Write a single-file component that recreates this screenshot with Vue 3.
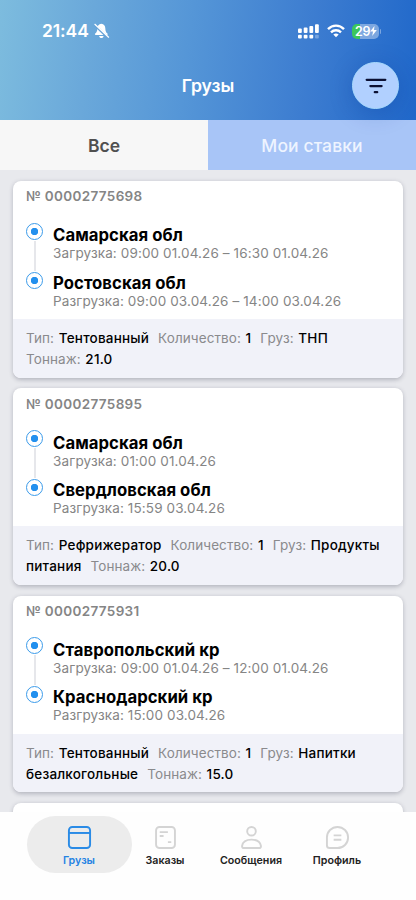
<script setup>
const cargos = [
  {
    id: '00002775698',
    stops: [
      { place: 'Самарская обл', time: 'Загрузка: 09:00 01.04.26 – 16:30 01.04.26' },
      { place: 'Ростовская обл', time: 'Разгрузка: 09:00 03.04.26 – 14:00 03.04.26' },
    ],
    meta: [['Тип:', 'Тентованный'], ['Количество:', '1'], ['Груз:', 'ТНП'], ['Тоннаж:', '21.0']],
  },
  {
    id: '00002775895',
    stops: [
      { place: 'Самарская обл', time: 'Загрузка: 01:00 01.04.26' },
      { place: 'Свердловская обл', time: 'Разгрузка: 15:59 03.04.26' },
    ],
    meta: [['Тип:', 'Рефрижератор'], ['Количество:', '1'], ['Груз:', 'Продукты питания'], ['Тоннаж:', '20.0']],
  },
  {
    id: '00002775931',
    stops: [
      { place: 'Ставропольский кр', time: 'Загрузка: 09:00 01.04.26 – 12:00 01.04.26' },
      { place: 'Краснодарский кр', time: 'Разгрузка: 15:00 03.04.26' },
    ],
    meta: [['Тип:', 'Тентованный'], ['Количество:', '1'], ['Груз:', 'Напитки безалкогольные'], ['Тоннаж:', '15.0']],
  },
]
</script>

<template>
  <div class="screen">
    <header class="header">
      <div class="status">
        <div class="clock">
          <span class="time">21:44</span>
          <svg class="bell" width="16" height="16" viewBox="0 0 16 16">
            <path d="M7.3 0.7C4.7 0.9 3.5 2.8 3.4 5.2C3.3 8.2 2.6 9.3 1.2 10.6C0.6 11.3 0.9 12 1.8 12H12.9C13.8 12 14 11.3 13.4 10.6C12 9.3 11.4 8.2 11.3 5.2C11.2 2.8 10 0.9 7.3 0.7Z" fill="#fff" />
            <path d="M5.1 13H9.6C9.3 14.4 8.5 15 7.35 15S5.4 14.4 5.1 13Z" fill="#fff" />
            <path d="M0.8 2.1L14 14.9" stroke="#68a3d7" stroke-width="2.2" />
            <path d="M0.9 1.3L14.6 14.2" stroke="#fff" stroke-width="1.2" stroke-linecap="round" />
          </svg>
        </div>
        <div class="indicators">
          <svg width="21" height="15" viewBox="0 0 21 15" fill="#fff">
            <rect x="0" y="4.6" width="3.8" height="4.4" rx="1" />
            <rect x="5.7" y="3.4" width="3.8" height="5.6" rx="1" />
            <rect x="11.4" y="1.9" width="3.8" height="7.1" rx="1" />
            <rect x="17" y="0.2" width="3.8" height="8.8" rx="1" />
            <rect x="0" y="10.8" width="3.8" height="3.8" rx="1" />
            <rect x="5.7" y="10.8" width="3.8" height="3.8" rx="1" />
            <rect x="11.4" y="10.8" width="3.8" height="3.8" rx="1" />
            <rect x="17" y="10.8" width="3.8" height="3.8" rx="1" opacity="0.3" />
          </svg>
          <svg class="wifi" width="18" height="14" viewBox="0 0 18 14" fill="none" stroke="#fff" stroke-width="2.4">
            <path d="M1 5.1C5.5 0.5 12.5 0.5 17 5.1" />
            <path d="M4 8.3C6.8 5.6 11.2 5.6 14 8.3" />
            <path d="M6.3 10.6C7.9 9.2 10.1 9.2 11.7 10.6L9 13.3Z" fill="#fff" stroke="none" />
          </svg>
          <div class="battery">
            <span>29</span>
            <svg width="7" height="10" viewBox="0 0 7 10"><path d="M4.5 0L0.2 5.6H3L2.2 10L6.8 4H4Z" fill="#fff" /></svg>
          </div>
          <i class="battery-tip"></i>
        </div>
      </div>
      <div class="bar">
        <h1>Грузы</h1>
        <button class="filter" aria-label="Фильтр">
          <svg width="22" height="16" viewBox="0 0 22 16" stroke="#0b1033" stroke-width="2.3" stroke-linecap="round">
            <path d="M1.7 1.8H20.3M5.4 8.1H16.6M9.8 14.2H12.2" />
          </svg>
        </button>
      </div>
    </header>

    <div class="tabs">
      <div class="tab">Все</div>
      <div class="tab tab-bids">Мои ставки</div>
    </div>

    <main class="list">
      <article v-for="cargo in cargos" :key="cargo.id" class="card">
        <div class="body">
          <div class="number">№ {{ cargo.id }}</div>
          <div class="route">
            <div class="rail">
              <i class="dot"></i>
              <i class="line"></i>
              <i class="dot"></i>
            </div>
            <div class="stops">
              <div v-for="stop in cargo.stops" :key="stop.place">
                <div class="place">{{ stop.place }}</div>
                <div class="when">{{ stop.time }}</div>
              </div>
            </div>
          </div>
        </div>
        <div class="meta">
          <template v-for="[label, value] in cargo.meta" :key="label">
            <span class="label">{{ label }}&nbsp;</span><span class="value">{{ value }}</span>{{ ' ' }}
          </template>
        </div>
      </article>
      <article class="card card-next"></article>
    </main>

    <nav class="nav">
      <div class="item active">
        <svg width="25" height="25" viewBox="0 0 26 26" fill="none" stroke="#2a8be6" stroke-width="2">
          <rect x="2" y="2" width="22" height="22" rx="3.5" />
          <path d="M2 8.3H24" />
        </svg>
        <span>Грузы</span>
      </div>
      <div class="item">
        <svg width="25" height="25" viewBox="0 0 26 26" fill="none" stroke="#d4d4d4" stroke-width="2">
          <rect x="3.2" y="2" width="19.6" height="22" rx="3.5" />
          <path d="M7 7.4H15.5M7 11.4H11M15.5 17.8H19" />
        </svg>
        <span>Заказы</span>
      </div>
      <div class="item">
        <svg width="25" height="25" viewBox="0 0 26 26" fill="none" stroke="#d4d4d4" stroke-width="2">
          <circle cx="13" cy="6.5" r="4.5" />
          <path d="M5.2 24H20.8C22.2 24 23 23.2 22.8 21.8C22.1 17.4 18.3 15.2 13 15.2S3.9 17.4 3.2 21.8C3 23.2 3.8 24 5.2 24Z" />
        </svg>
        <span>Сообщения</span>
      </div>
      <div class="item">
        <svg width="25" height="25" viewBox="0 0 26 26" fill="none" stroke="#d4d4d4" stroke-width="2">
          <path d="M13 2A11 11 0 0 1 13 24H5A3 3 0 0 1 2 21V13A11 11 0 0 1 13 2Z" />
          <path d="M9 10.8H17M9 15.3H17" />
        </svg>
        <span>Профиль</span>
      </div>
    </nav>
  </div>
</template>

<style>
body {
  margin: 0;
}
</style>

<style scoped>
.screen {
  width: 416px;
  height: 900px;
  display: flex;
  flex-direction: column;
  overflow: hidden;
  background: #e8e9ed;
  font-family: Inter, 'Liberation Sans', sans-serif;
  color: #000;
}
.header {
  position: relative;
  z-index: 2;
  flex: none;
  height: 119.5px;
  background: linear-gradient(97deg, #7dbcde 0%, #6aa8da 22%, #5596d7 45%, #3c7cd0 74%, #2068ca 100%);
}
.status {
  height: 61.5px;
  box-sizing: border-box;
  padding: 0 35px 0 42px;
  display: flex;
  justify-content: space-between;
  align-items: center;
  color: #fff;
}
.clock,
.indicators {
  display: flex;
  align-items: center;
}
.indicators {
  padding-top: 1px;
}
.time {
  font-size: 17.5px;
  line-height: 20px;
  padding-top: 1px;
  font-weight: 600;
  letter-spacing: -0.1px;
}
.bell {
  margin-left: 5px;
}
.wifi {
  margin-left: 8px;
}
.battery {
  margin-left: 7px;
  width: 27px;
  height: 15px;
  box-sizing: border-box;
  padding-left: 2px;
  border-radius: 5px;
  background: linear-gradient(90deg, #3cc75b 29%, rgba(255, 255, 255, 0.38) 29%);
  display: flex;
  align-items: center;
  justify-content: center;
  font-size: 12.5px;
  font-weight: 600;
  letter-spacing: -0.3px;
}
.battery-tip {
  width: 1.5px;
  height: 5px;
  margin-left: 1px;
  border-radius: 0 2px 2px 0;
  background: rgba(255, 255, 255, 0.38);
}
.bar {
  height: 48px;
  padding: 0 17px;
  display: grid;
  grid-template-columns: 47px 1fr 47px;
  align-items: center;
}
h1 {
  grid-column: 2;
  margin: 0;
  padding-top: 1px;
  text-align: center;
  font-size: 17.6px;
  line-height: 24px;
  font-weight: 600;
  color: #fff;
}
.filter {
  width: 47px;
  height: 47px;
  box-sizing: border-box;
  padding: 0;
  border: 1px solid #a9dafd;
  border-radius: 50%;
  background: #b1d0ff;
  display: flex;
  align-items: center;
  justify-content: center;
  box-shadow: 0 4px 24px rgba(10, 40, 130, 0.22);
}
.tabs {
  flex: none;
  height: 50.5px;
  display: flex;
}
.tab {
  flex: 1;
  padding-top: 1px;
  display: flex;
  align-items: center;
  justify-content: center;
  background: #f7f7f7;
  color: #505050;
  font-size: 17.5px;
  font-weight: 600;
}
.tab-bids {
  background: #a8c5f7;
  color: #eef4ff;
  font-weight: 500;
  letter-spacing: 0.1px;
}
.list {
  flex: 1;
  min-height: 0;
  overflow: hidden;
  padding: 11px 13px 0;
}
.card {
  height: 196.5px;
  margin-bottom: 10.8px;
  border-radius: 8px;
  overflow: hidden;
  background: #fff;
  box-shadow: 0 1.5px 4px rgba(50, 55, 75, 0.28);
}
.body {
  height: 138px;
  box-sizing: border-box;
  padding: 6.3px 13px 0;
}
.number {
  font-size: 13.5px;
  line-height: 18px;
  font-weight: 600;
  letter-spacing: 0.32px;
  color: #858585;
}
.route {
  display: flex;
  gap: 10px;
  padding-top: 17.5px;
}
.rail {
  width: 17px;
  display: flex;
  flex-direction: column;
  align-items: center;
}
.dot {
  width: 17px;
  height: 17px;
  box-sizing: border-box;
  border: 1.4px solid #3b9bea;
  border-radius: 50%;
  background: radial-gradient(circle, #2390ee 3.4px, #fff 4px);
}
.line {
  width: 2px;
  height: 30px;
  margin: 1px 0;
  background: #e6e7eb;
}
.stops {
  display: flex;
  flex-direction: column;
  gap: 10.5px;
  padding-top: 2.5px;
}
.place {
  font-size: 16.7px;
  line-height: 20px;
  font-weight: 700;
  letter-spacing: 0.06px;
}
.when {
  font-size: 13.5px;
  line-height: 17px;
  letter-spacing: 0.12px;
  color: #858585;
  white-space: nowrap;
}
.meta {
  height: 58.5px;
  box-sizing: border-box;
  padding: 9.2px 12px 0 13px;
  background: #f1f2f9;
  font-size: 13.5px;
  line-height: 21px;
}
.label {
  color: #8a8a8d;
  letter-spacing: 0.08px;
  margin-right: 0.8px;
}
.value {
  font-weight: 500;
  letter-spacing: 0.2px;
  margin-right: 5.2px;
}
.nav {
  flex: none;
  height: 88px;
  box-sizing: border-box;
  padding: 4px 26px 0 26.5px;
  display: flex;
  background: #fefefe;
}
.item {
  width: 86px;
  height: 57px;
  flex: none;
  box-sizing: border-box;
  padding-top: 9px;
  display: flex;
  flex-direction: column;
  align-items: center;
  gap: 3px;
  font-size: 10.7px;
  line-height: 15px;
  font-weight: 600;
  color: #222;
}
.item.active {
  width: 105px;
  margin-right: -9.5px;
  border-radius: 28.5px;
  background: #ececec;
  color: #2583e3;
}
</style>
